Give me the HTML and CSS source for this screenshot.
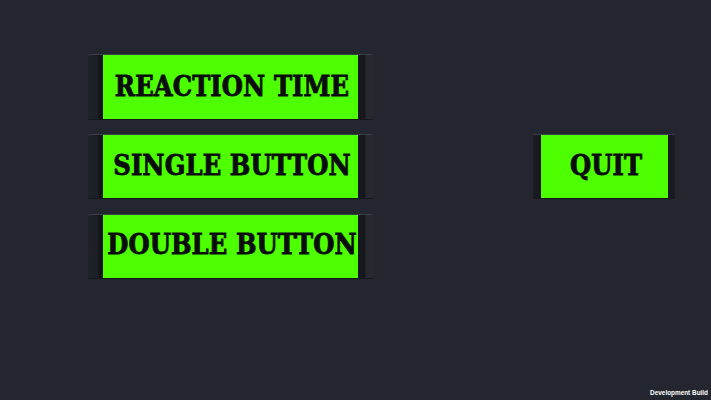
FILE: index.html
```html
<!DOCTYPE html>
<html lang="en">

<head>
    <meta charset="UTF-8">
    <meta name="viewport" content="width=device-width, initial-scale=1.0">
    <title>Menu</title>
    <link rel="stylesheet" href="styles.css">
</head>

<body>
    <div class="menu">
        <div class="column">
            <div class="btn wide first"><span class="face">REACTION TIME</span></div>
            <div class="btn wide"><span class="face">SINGLE BUTTON</span></div>
            <div class="btn wide"><span class="face raised">DOUBLE BUTTON</span></div>
        </div>
        <div class="btn quit"><span class="face">QUIT</span></div>
    </div>
    <div class="build">Development Build</div>
</body>

</html>
```

FILE: styles.css
```css
html, body {
    margin: 0;
    height: 100%;
}
body {
    width: 711px;
    height: 400px;
    overflow: hidden;
    background-color: #23262f;
    display: flex;
    flex-direction: column;
}
.menu {
    display: flex;
    align-items: center;
    padding: 54px 36px 0 88px;
    gap: 160px;
}
.column {
    display: flex;
    flex-direction: column;
    gap: 15px;
}
.btn {
    height: 65px;
    box-sizing: border-box;
    display: flex;
    justify-content: center;
    align-items: stretch;
    border-top: 1px solid #3a3d45;
    border-bottom: 1px solid #15161b;
    border-radius: 2px;
}
.wide {
    width: 285px;
    background: linear-gradient(90deg, #202229 0, #1c1e25 10px, #131419 11px, #131419 15px, #16171c 270px, #16171c 277px, #26282f 278px, #26282f 285px);
}
.first {
    height: 66px;
    margin-bottom: -1px;
}
.quit {
    width: 142px;
    background: linear-gradient(90deg, #1c1e24 0, #15161b 8px, #15161b 134px, #1b1d23 142px);
}
.face {
    display: flex;
    align-items: center;
    justify-content: center;
    box-sizing: border-box;
    padding-bottom: 2px;
    background-color: #4dff00;
    color: #0b0d0c;
    font-family: "DejaVu Serif", "Liberation Serif", serif;
    font-stretch: condensed;
    font-weight: bold;
    font-size: 27px;
    letter-spacing: 0.1px;
    -webkit-text-stroke: 0.8px #0b0d0c;
    white-space: nowrap;
}
.wide .face {
    width: 255px;
    padding-left: 3px;
}
.raised {
    padding-bottom: 5px;
}
.quit .face {
    width: 127px;
    padding-left: 4px;
}
.build {
    margin-top: auto;
    align-self: flex-end;
    padding: 0 3px 3px 0;
    color: #ffffff;
    font-family: "Liberation Sans", sans-serif;
    font-weight: bold;
    font-size: 6.4px;
    line-height: 9px;
}
```
